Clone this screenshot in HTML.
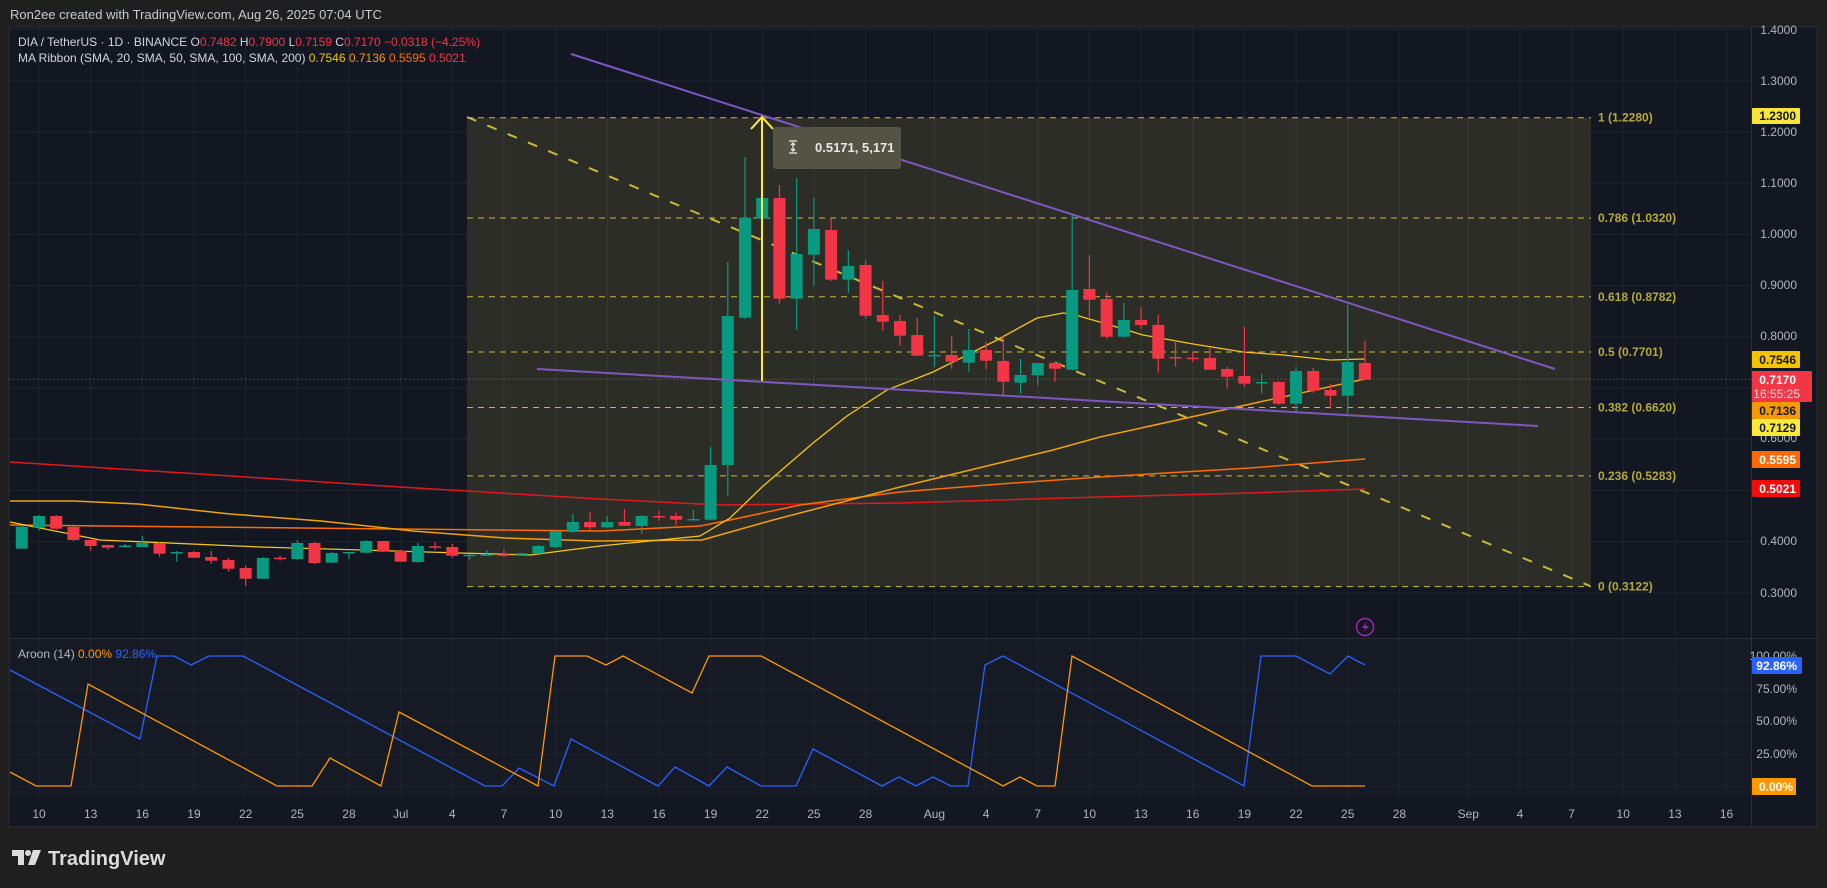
<!DOCTYPE html>
<html><head><meta charset="utf-8">
<style>
html,body{margin:0;padding:0;background:#1f1f1f;width:1827px;height:888px;overflow:hidden;font-family:"Liberation Sans",sans-serif}
svg{position:absolute;left:0;top:0}
text{font-family:"Liberation Sans",sans-serif}
</style></head><body>
<svg id="s" width="1827" height="888" viewBox="0 0 1827 888" xmlns="http://www.w3.org/2000/svg">
<rect x="0" y="0" width="1827" height="888" fill="#1f1f1f"/>
<text x="10" y="19" font-size="13" fill="#c9cbd1">Ron2ee created with TradingView.com, Aug 26, 2025 07:04 UTC</text>
<rect x="9" y="27" width="1808" height="800" fill="#131722" stroke="#2a2e39" stroke-width="1"/>
<rect x="9.5" y="639" width="1742" height="158" fill="#161a25"/>
<g id="grid" stroke="#1f2330" stroke-width="1"></g>
<!-- fib box -->
<rect x="467" y="117.7" width="1124" height="469" fill="#2d2d27"/>
<g id="grid2" stroke="#3a3a33" stroke-width="1"></g>
<g stroke="#c8b93a" stroke-width="1" stroke-dasharray="6,5" fill="none">
<line x1="467" y1="117.7" x2="1591" y2="117.7"/>
<line x1="467" y1="218" x2="1591" y2="218"/>
<line x1="467" y1="296.8" x2="1591" y2="296.8"/>
<line x1="467" y1="352" x2="1591" y2="352"/>
<line x1="467" y1="407.5" x2="1591" y2="407.5"/>
<line x1="467" y1="475.9" x2="1591" y2="475.9"/>
<line x1="467" y1="586.6" x2="1591" y2="586.6"/>
</g>
<g font-size="12" fill="#b5a93c" font-weight="bold">
<text x="1598" y="121.7">1 (1.2280)</text>
<text x="1598" y="222">0.786 (1.0320)</text>
<text x="1598" y="300.8">0.618 (0.8782)</text>
<text x="1598" y="356">0.5 (0.7701)</text>
<text x="1598" y="411.5">0.382 (0.6620)</text>
<text x="1598" y="479.9">0.236 (0.5283)</text>
<text x="1598" y="590.6">0 (0.3122)</text>
</g>
<line x1="467" y1="117" x2="1590" y2="586" stroke="#c8b93a" stroke-width="2" stroke-dasharray="10,12"/>
<!-- MAs -->
<polyline fill="none" stroke="#e0191e" stroke-width="1.5" points="10,462 200,474 400,487 600,499 720,505 900,503 1100,497 1250,493 1365,489"/>
<polyline fill="none" stroke="#ff6d00" stroke-width="1.5" points="10,525 400,529 600,531 700,526 730,520 800,505 900,492 1000,484 1100,477 1250,468 1365,459"/>
<polyline fill="none" stroke="#f0a30a" stroke-width="1.5" points="10,501 73,501 138,504 230,514 321,521 413,531 505,538 597,541 702,540 773,520 900,487 1053,450 1100,437 1223,410 1365,379"/>
<polyline fill="none" stroke="#f5c518" stroke-width="1.3" points="10,522 100,540 260,547 460,553 530,555 600,546 700,536 730,518 762,487 813,443 847,416 887,390 933,372 997,340 1037,318 1063,313 1072,314 1110,325 1143,335 1193,344 1243,352 1283,355 1330,360 1365,359"/>
<g id="candles"></g>
<!-- trendlines -->
<line x1="571" y1="54" x2="1555" y2="369" stroke="#7e57c2" stroke-width="2"/>
<line x1="537" y1="369" x2="1538" y2="426" stroke="#7e57c2" stroke-width="2"/>
<!-- current price line -->
<line x1="9" y1="379.3" x2="1751" y2="379.3" stroke="#f23645" stroke-width="1" stroke-dasharray="1,3"/>
<!-- measure -->
<line x1="762" y1="118" x2="762" y2="381" stroke="#ffeb3b" stroke-width="2"/>
<polyline points="751,129 762,117 773,129" fill="none" stroke="#ffeb3b" stroke-width="2"/>
<rect x="773" y="127" width="128" height="42" rx="3" fill="#555345"/>
<g stroke="#e8e8e8" stroke-width="1.3" fill="none"><line x1="789" y1="141" x2="797" y2="141"/><line x1="789" y1="153" x2="797" y2="153"/><line x1="793" y1="143" x2="793" y2="151"/><polyline points="791,145 793,143 795,145"/><polyline points="791,149 793,151 795,149"/></g>
<text x="815" y="152" font-size="13" font-weight="bold" fill="#e8e8e8">0.5171, 5,171</text>
<!-- lightning -->
<circle cx="1365" cy="627" r="8.5" fill="none" stroke="#9c27b0" stroke-width="1.5"/>
<path d="M1367 621 L1362 628 L1366 628 L1363 633 L1369 626 L1365 626 Z" fill="#9c27b0"/>
<!-- separators -->
<line x1="9" y1="638.5" x2="1817" y2="638.5" stroke="#2a2e39"/>
<line x1="1751.5" y1="27" x2="1751.5" y2="827" stroke="#2a2e39"/>
<!-- aroon -->
<polyline fill="none" stroke="#2962ff" stroke-width="1.3" points="10,670 140,739 157,656 174,656 191,665 209,656 243,656 485,786 502,786 519,768 554,786 571,739 658,786 675,767 709,786 727,767 761,786 796,786 813,749 882,786 899,777 916,786 933,777 951,786 968,786 985,665 1003,656 1244,786 1261,656 1296,656 1330,674 1348,656 1365,665"/>
<polyline fill="none" stroke="#ff9800" stroke-width="1.3" points="10,772 36,786 71,786 88,684 277,786 312,786 330,758 381,786 399,712 538,786 555,656 587,656 606,665 623,656 692,693 709,656 761,656 1003,786 1020,777 1037,786 1055,786 1072,656 1312,786 1365,786"/>
<text x="18" y="658" font-size="12" fill="#b2b5be">Aroon (14) <tspan fill="#ff9800">0.00%</tspan> <tspan fill="#2962ff">92.86%</tspan></text>
<!-- legend -->
<text x="18" y="46" font-size="12" fill="#d1d4dc">DIA / TetherUS · 1D · BINANCE  O<tspan fill="#f23645">0.7482</tspan>  H<tspan fill="#f23645">0.7900</tspan>  L<tspan fill="#f23645">0.7159</tspan>  C<tspan fill="#f23645">0.7170</tspan>  <tspan fill="#f23645">−0.0318 (−4.25%)</tspan></text>
<text x="18" y="62" font-size="12" fill="#d1d4dc">MA Ribbon (SMA, 20, SMA, 50, SMA, 100, SMA, 200)  <tspan fill="#f5c400">0.7546</tspan>  <tspan fill="#f59a00">0.7136</tspan>  <tspan fill="#ff6d00">0.5595</tspan>  <tspan fill="#f23645">0.5021</tspan></text>
<!-- price axis -->
<g font-size="12" fill="#b2b5be" text-anchor="end">
<text x="1797" y="34">1.4000</text><text x="1797" y="85">1.3000</text><text x="1797" y="136">1.2000</text><text x="1797" y="187">1.1000</text><text x="1797" y="238">1.0000</text><text x="1797" y="289">0.9000</text><text x="1797" y="340">0.8000</text><text x="1797" y="442">0.6000</text><text x="1797" y="545">0.4000</text><text x="1797" y="597">0.3000</text>
<text x="1797" y="660">100.00%</text><text x="1797" y="693">75.00%</text><text x="1797" y="725">50.00%</text><text x="1797" y="758">25.00%</text>
</g>
<g font-size="12" font-weight="bold" text-anchor="end">
<rect x="1752" y="108" width="48" height="16" rx="1" fill="#f7e53b"/><text x="1796" y="120" fill="#131722">1.2300</text>
<rect x="1752" y="351" width="48" height="17" rx="1" fill="#f5c400"/><text x="1796" y="364" fill="#131722">0.7546</text>
<rect x="1752" y="371" width="60" height="31" rx="1" fill="#f23645"/><text x="1796" y="384" fill="#fff">0.7170</text><text x="1800" y="398" fill="#ffd9dc" font-weight="normal">16:55:25</text>
<rect x="1752" y="402" width="48" height="17" rx="1" fill="#f59a00"/><text x="1796" y="415" fill="#131722">0.7136</text>
<rect x="1752" y="419" width="48" height="17" rx="1" fill="#fbe93b"/><text x="1796" y="432" fill="#131722">0.7129</text>
<rect x="1752" y="451" width="48" height="17" rx="1" fill="#ff6a00"/><text x="1796" y="464" fill="#fff">0.5595</text>
<rect x="1752" y="480" width="48" height="17" rx="1" fill="#f20d0d"/><text x="1796" y="493" fill="#fff">0.5021</text>
<rect x="1752" y="657" width="50" height="17" rx="1" fill="#2962ff"/><text x="1797" y="670" fill="#fff">92.86%</text>
<rect x="1752" y="778" width="44" height="17" rx="1" fill="#ff9800"/><text x="1793" y="791" fill="#fff">0.00%</text>
</g>
<g id="dates" font-size="12" fill="#b2b5be" text-anchor="middle"></g>
<!-- logo -->
<g fill="#dcdcdc">
<path d="M12 850 H24 V865 H18 V856 H12 Z"/>
<circle cx="28" cy="853" r="3"/>
<path d="M33 850 H41 L35 865 H28 Z"/>
</g>
<text x="48" y="865" font-size="20" font-weight="bold" fill="#dcdcdc">TradingView</text>
</svg>
<script>
var NS="http://www.w3.org/2000/svg";
function X(d){return 39+17.22*d;}
function el(p,t,a){var e=document.createElementNS(NS,t);for(var k in a)e.setAttribute(k,a[k]);p.appendChild(e);return e;}
var grid=document.getElementById('grid'),grid2=document.getElementById('grid2');
for(var p=3;p<=14;p++){var y=132+(1.2-p/10)*512;el(grid,'line',{x1:9,x2:1751,y1:y,y2:y});}
[656,689,721,754,786].forEach(function(y){el(grid,'line',{x1:9,x2:1751,y1:y,y2:y});});
var dl=[[0,'10'],[3,'13'],[6,'16'],[9,'19'],[12,'22'],[15,'25'],[18,'28'],[21,'Jul'],[24,'4'],[27,'7'],[30,'10'],[33,'13'],[36,'16'],[39,'19'],[42,'22'],[45,'25'],[48,'28'],[52,'Aug'],[55,'4'],[58,'7'],[61,'10'],[64,'13'],[67,'16'],[70,'19'],[73,'22'],[76,'25'],[79,'28'],[83,'Sep'],[86,'4'],[89,'7'],[92,'10'],[95,'13'],[98,'16']];
var dg=document.getElementById('dates');
dl.forEach(function(a){var x=X(a[0]);el(grid,'line',{x1:x,x2:x,y1:27,y2:797});
 if(x>467&&x<1591)el(grid2,'line',{x1:x,x2:x,y1:118,y2:586});
 var t=el(dg,'text',{x:x,y:818});t.textContent=a[1];});
var C=[[-1,526.7,548.7,525,549,1],[0,516,527.7,515,530.7,1],[1,516,528.7,515,529.7,0],[2,527,540,526,541,0],[3,540,546,540,550.7,0],[4,545,547.7,545,549.7,0],[5,545.5,546.5,544,548,1],[6,543,547,535.7,547,1],[7,543,553.7,542,556.7,0],[8,552,553,551,561.7,1],[9,552,557.7,551,558,0],[10,557,560.7,551,563.7,0],[11,560,568.7,558,571.7,0],[12,568,578.7,565.3,585.7,0],[13,558,578.7,557,578.7,1],[14,557.7,558.7,555.7,560.7,0],[15,543,559,540,560,1],[16,543,563,542,564,0],[17,553,562.7,552,563,1],[18,552,553,552,559.3,1],[19,541,552.7,540,553.5,1],[20,541,551.7,541,552,0],[21,551,561.7,550,562,0],[22,546,562,543,563,1],[23,546.3,547,542,549.7,0],[24,547,555.7,544,557.7,0],[25,554.7,555.5,554,559.7,1],[26,554.3,555.3,550,555.3,1],[27,554.3,555,550,557,0],[28,553.3,554.3,553,554.3,1],[29,546,553.3,545,554,1],[30,531,547,530,548,1],[31,522,532,514,533,1],[32,522,527.3,512,530.7,0],[33,522,527.3,516,528,1],[34,522,525.7,509,526,0],[35,516,526,515,533.7,1],[36,516,517,511,520.7,0],[37,516,519.7,512.7,525.3,0],[38,519,519.7,510,520,1],[39,465,519.7,446.7,520,1],[40,316,465,262,495.7,1],[41,217.7,317.7,157,319,1],[42,198,218.7,196,245.7,1],[43,198,298.7,185,303.7,0],[44,254,298.7,178,329.7,1],[45,229,254.7,198,285.7,1],[46,230,279.7,217.7,281,0],[47,266,279.7,250,293,1],[48,265,315.7,260.7,318.7,0],[49,315,321.7,281,330.7,0],[50,321,335.7,315,345.7,0],[51,335,355.7,318,356,0],[52,355,356,316,367,1],[53,355,361.7,336,368.7,0],[54,350,362.7,329,371.7,1],[55,350,360.7,342,369,0],[56,361,381.7,335,395.7,0],[57,375,382.7,359,393.7,1],[58,363,375.3,363,385.7,1],[59,363,368.7,361,381.7,0],[60,290,369.7,214,370.5,1],[61,289,299.7,255,317.3,0],[62,299,336.7,293,338.7,0],[63,320,336.7,303,337.5,1],[64,320,325,307,329,0],[65,325,358.7,315,372.7,0],[66,357,358,339.7,366.7,0],[67,357.7,358.7,351.7,361.7,0],[68,358,369.7,347.7,370,0],[69,369,376.7,367,388.7,0],[70,376,383.7,327,386.7,0],[71,382,383,373.7,393.7,1],[72,382,403.7,381,404.7,0],[73,371,403.7,367,412.7,1],[74,371,390.7,368,392.7,0],[75,390,395.7,384,408.7,0],[76,362,395.7,304.7,413.7,1],[77,363,379.7,341,379.7,0]];
var cg=document.getElementById('candles');
C.forEach(function(c){var x=X(c[0]),col=c[5]?'#089981':'#f23645';
 el(cg,'line',{x1:x,x2:x,y1:c[3],y2:c[4],stroke:col,'stroke-width':1.2});
 var h=Math.max(1.5,c[2]-c[1]);el(cg,'rect',{x:x-6,y:c[1],width:12,height:h,fill:col});});
</script>
</body></html>
